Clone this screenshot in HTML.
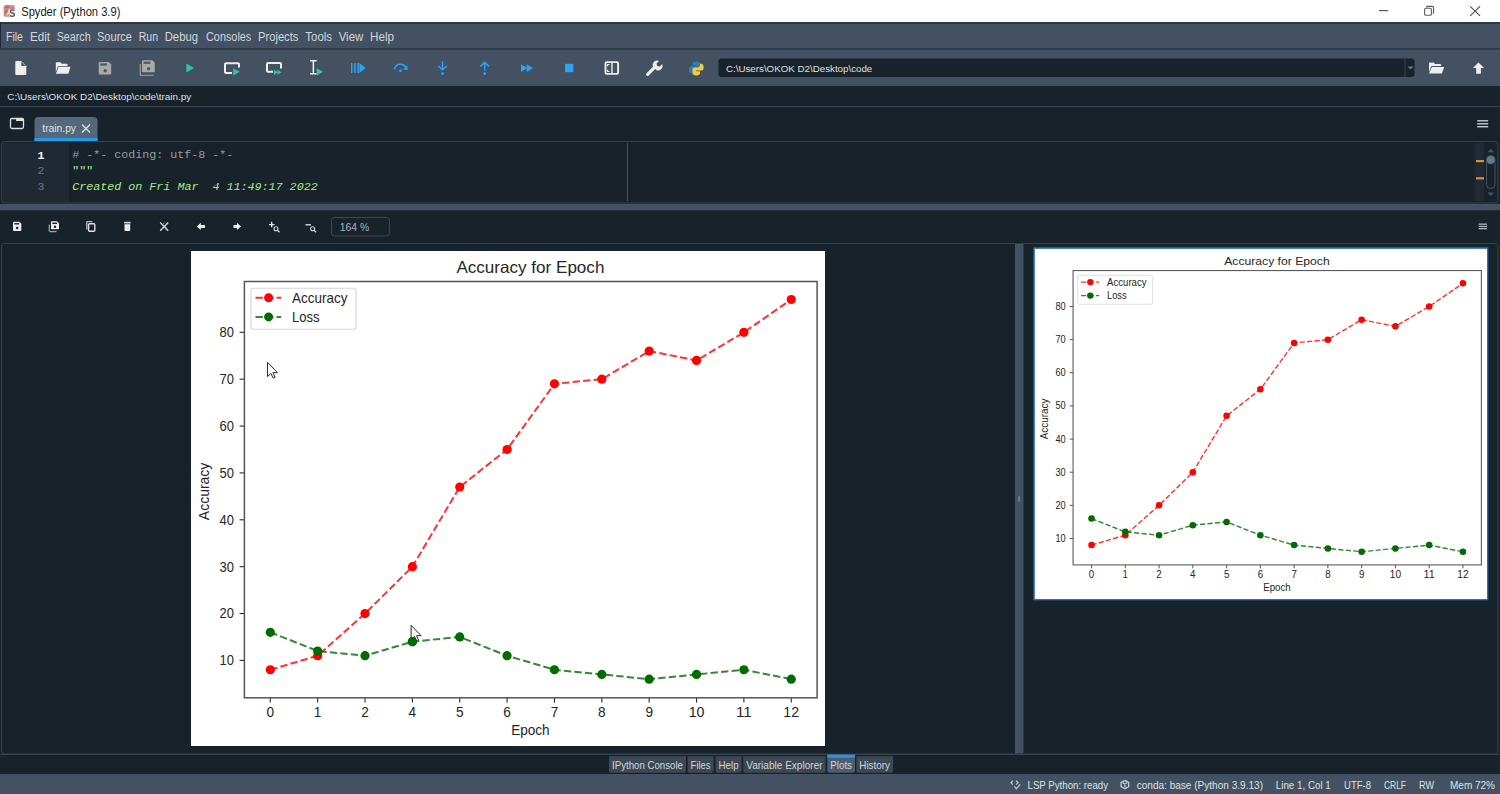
<!DOCTYPE html>
<html><head><meta charset="utf-8"><style>
html,body{margin:0;padding:0;background:#18222b;overflow:hidden;width:1500px;height:794px}
svg{display:block}
</style></head><body>
<svg width="1500" height="794" viewBox="0 0 1500 794">
<rect x="0" y="0" width="1500" height="22" fill="#ffffff" />
<rect x="3.6" y="5" width="11.2" height="11.8" rx="2.2" fill="#cf8a84"/>
<path d="M4.5 7 L8 6 L10 7.5 L6 8.5 Z M5 11 L7 9.5 L8 12 L5.5 13.5 Z" fill="#b9605c" opacity="0.8"/>
<path d="M9.2 8.6 L10.6 9.4 L8.2 14.8 L6.4 15.5 Z" fill="#f6e6e4"/>
<rect x="9.5" y="9.5" width="5.3" height="7.3" fill="#f2eeee"/>
<path d="M14.3 10.6 Q13.5 9.8 12.2 9.8 Q10.4 9.8 10.4 11.4 Q10.4 12.6 12.4 13 Q14.4 13.4 14.4 14.6 Q14.4 16.4 12.2 16.4 Q10.8 16.4 10 15.5" fill="none" stroke="#555" stroke-width="1.3"/>
<text xml:space="preserve" x="21.2" y="15.9" font-family="'Liberation Sans', sans-serif" font-size="12.4" fill="#1a1a1a" text-anchor="start" font-weight="normal" font-style="normal" textLength="99.2" lengthAdjust="spacingAndGlyphs" >Spyder (Python 3.9)</text>
<path d="M1379 10.6 H1388.3" stroke="#5c5c5c" stroke-width="1.2"/>
<rect x="1424.6" y="8.3" width="6.8" height="7" rx="1.3" fill="none" stroke="#5a5a5a" stroke-width="1.1"/><path d="M1426.3 7.3 Q1426.6 6.4 1427.6 6.4 H1432 Q1433.6 6.4 1433.6 8 V12.6 Q1433.6 13.4 1432.8 13.8" fill="none" stroke="#5a5a5a" stroke-width="1.1"/>
<path d="M1470.2 6.3 L1480 15.8 M1480 6.3 L1470.2 15.8" stroke="#4a4a4a" stroke-width="1.1"/>
<rect x="0" y="22" width="1500" height="2" fill="#2c3744" />
<rect x="0" y="24" width="1500" height="25" fill="#435162" />
<rect x="0" y="22" width="1" height="27" fill="#1f2a35" />
<rect x="0" y="48" width="1500" height="1.5" fill="#2f3a47" />
<text xml:space="preserve" x="6.0" y="40.9" font-family="'Liberation Sans', sans-serif" font-size="12" fill="#d3d7db" text-anchor="start" font-weight="normal" font-style="normal" textLength="16.9" lengthAdjust="spacingAndGlyphs" >File</text>
<text xml:space="preserve" x="30.0" y="40.9" font-family="'Liberation Sans', sans-serif" font-size="12" fill="#d3d7db" text-anchor="start" font-weight="normal" font-style="normal" textLength="20.0" lengthAdjust="spacingAndGlyphs" >Edit</text>
<text xml:space="preserve" x="56.7" y="40.9" font-family="'Liberation Sans', sans-serif" font-size="12" fill="#d3d7db" text-anchor="start" font-weight="normal" font-style="normal" textLength="34.0" lengthAdjust="spacingAndGlyphs" >Search</text>
<text xml:space="preserve" x="97.0" y="40.9" font-family="'Liberation Sans', sans-serif" font-size="12" fill="#d3d7db" text-anchor="start" font-weight="normal" font-style="normal" textLength="35.0" lengthAdjust="spacingAndGlyphs" >Source</text>
<text xml:space="preserve" x="138.7" y="40.9" font-family="'Liberation Sans', sans-serif" font-size="12" fill="#d3d7db" text-anchor="start" font-weight="normal" font-style="normal" textLength="19.3" lengthAdjust="spacingAndGlyphs" >Run</text>
<text xml:space="preserve" x="164.7" y="40.9" font-family="'Liberation Sans', sans-serif" font-size="12" fill="#d3d7db" text-anchor="start" font-weight="normal" font-style="normal" textLength="33.3" lengthAdjust="spacingAndGlyphs" >Debug</text>
<text xml:space="preserve" x="206.0" y="40.9" font-family="'Liberation Sans', sans-serif" font-size="12" fill="#d3d7db" text-anchor="start" font-weight="normal" font-style="normal" textLength="45.3" lengthAdjust="spacingAndGlyphs" >Consoles</text>
<text xml:space="preserve" x="258.0" y="40.9" font-family="'Liberation Sans', sans-serif" font-size="12" fill="#d3d7db" text-anchor="start" font-weight="normal" font-style="normal" textLength="40.4" lengthAdjust="spacingAndGlyphs" >Projects</text>
<text xml:space="preserve" x="305.3" y="40.9" font-family="'Liberation Sans', sans-serif" font-size="12" fill="#d3d7db" text-anchor="start" font-weight="normal" font-style="normal" textLength="26.7" lengthAdjust="spacingAndGlyphs" >Tools</text>
<text xml:space="preserve" x="338.7" y="40.9" font-family="'Liberation Sans', sans-serif" font-size="12" fill="#d3d7db" text-anchor="start" font-weight="normal" font-style="normal" textLength="24.6" lengthAdjust="spacingAndGlyphs" >View</text>
<text xml:space="preserve" x="370.0" y="40.9" font-family="'Liberation Sans', sans-serif" font-size="12" fill="#d3d7db" text-anchor="start" font-weight="normal" font-style="normal" textLength="24.0" lengthAdjust="spacingAndGlyphs" >Help</text>
<rect x="0" y="49.5" width="1500" height="36.5" fill="#435162" />
<rect x="718.5" y="58.5" width="696" height="18.5" rx="3" fill="#18222b"/>
<rect x="1404.5" y="59" width="1" height="18" fill="#37414f" />
<path d="M1407.5 66.5 L1410.5 69.5 L1413.5 66.5 Z" fill="#60798b"/>
<text xml:space="preserve" x="726.0" y="71.6" font-family="'Liberation Sans', sans-serif" font-size="9.7" fill="#dfe1e2" text-anchor="start" font-weight="normal" font-style="normal" textLength="146.3" lengthAdjust="spacingAndGlyphs" >C:\Users\OKOK D2\Desktop\code</text>
<path d="M15.3 62 Q15.3 61 16.3 61 H21.2 L26.3 66.2 V73.9 Q26.3 74.9 25.3 74.9 H16.3 Q15.3 74.9 15.3 73.9 Z" fill="#eeeeee"/>
<path d="M21.3 61.8 V66.1 H25.6 Z" fill="#4a5664"/>
<path d="M55.8 63.2 Q55.8 62.3 56.7 62.3 H60.5 L61.8 63.8 H66.7 Q67.5 63.8 67.5 64.6 V66 H59 Q58 66 57.6 67 L55.8 72 Z" fill="#eeeeee"/>
<path d="M58.6 66.8 H70.5 L68.3 73.7 H55.8 Z" fill="#eeeeee"/>
<path d="M98.7 63 Q98.7 62 99.7 62 H108.7 L111.2 64.5 V73.4 Q111.2 74.4 110.2 74.4 H99.7 Q98.7 74.4 98.7 73.4 Z" fill="#a9a9a9"/>
<rect x="100.3" y="63.4" width="6.50" height="2.23" fill="#4a5664"/>
<circle cx="105.20" cy="70.68" r="1.7" fill="#4a5664"/>
<path d="M140.3 64 V74.6 Q140.3 75.4 141.1 75.4 H153.6" fill="none" stroke="#8e949a" stroke-width="1.4"/>
<path d="M142 61.3 Q142 60.3 143 60.3 H152.3 L154.8 62.8 V71.3 Q154.8 72.3 153.8 72.3 H143 Q142 72.3 142 71.3 Z" fill="#a9a9a9"/>
<rect x="143.6" y="61.699999999999996" width="6.66" height="2.16" fill="#4a5664"/>
<circle cx="148.66" cy="68.70" r="1.7" fill="#4a5664"/>
<path d="M186.4 63.4 L194 68 L186.4 72.6 Z" fill="#33c3a5"/>
<path d="M232 73 H226 Q225 73 225 72 V64.2 Q225 63.3 226 63.3 H238 Q239 63.3 239 64.2 V67.5" fill="none" stroke="#eeeeee" stroke-width="2"/>
<path d="M233.2 68.2 L239.8 71.8 L233.2 75.4 Z" fill="#33c3a5"/>
<path d="M273 71.8 H268 Q267 71.8 267 70.8 V63.9 Q267 63 268 63 H280 Q281 63 281 63.9 V68.5" fill="none" stroke="#eeeeee" stroke-width="2"/>
<path d="M273.9 69.7 L278 72.2 L273.9 74.8 Z M277.5 69.7 L281.6 72.2 L277.5 74.8 Z" fill="#33c3a5"/>
<path d="M310 60.8 H316.7 M313.35 60.8 V73.7 M310 73.7 H316.7" fill="none" stroke="#eeeeee" stroke-width="1.5"/>
<path d="M316.8 68.2 L323 71.85 L316.8 75.5 Z" fill="#33c3a5"/>
<rect x="351" y="63" width="1.5" height="10" fill="#2ea3f2"/><rect x="354.2" y="63" width="1.5" height="10" fill="#2ea3f2"/><rect x="357.4" y="63" width="1.5" height="10" fill="#2ea3f2"/>
<path d="M359.5 63 L365.6 68 L359.5 73 Z" fill="#2ea3f2"/>
<path d="M394.3 69.5 Q395.5 64.2 400.4 64.2 Q404 64.2 405.8 67" fill="none" stroke="#2ea3f2" stroke-width="1.6"/>
<path d="M407.3 65.6 L407.6 70.3 L403.2 69.2 Z" fill="#2ea3f2"/>
<circle cx="400.4" cy="70.8" r="1.4" fill="#2ea3f2"/>
<path d="M442.5 61.2 V69.3 M438.3 66 L442.5 69.8 L446.8 66" fill="none" stroke="#2ea3f2" stroke-width="1.5"/>
<circle cx="442.5" cy="73.6" r="1.4" fill="#2ea3f2"/>
<path d="M484.7 62 V70.6 M480.4 66.4 L484.7 62.2 L489 66.4" fill="none" stroke="#2ea3f2" stroke-width="1.5"/>
<circle cx="484.7" cy="73.6" r="1.4" fill="#2ea3f2"/>
<path d="M521 64.2 L527.3 68 L521 71.9 Z M526.8 64.2 L533.1 68 L526.8 71.9 Z" fill="#2ea3f2"/>
<rect x="565" y="63.8" width="8.4" height="8.4" fill="#2ea3f2"/>
<rect x="605.5" y="62.1" width="12.6" height="11.8" rx="1.3" fill="none" stroke="#eeeeee" stroke-width="1.9"/>
<rect x="611.3" y="62" width="1.4" height="12" fill="#eeeeee"/>
<path d="M609.5 64.5 H607.6 V66.3 M609.5 71.5 H607.6 V69.7" fill="none" stroke="#eeeeee" stroke-width="1.1"/>
<path d="M647.6 74.4 L654.6 67.4" stroke="#eeeeee" stroke-width="3.1" stroke-linecap="round"/>
<path d="M652.8 66.6 A4.6 4.6 0 0 1 659 60.9 L656.5 63.4 L657.2 65.9 L659.7 66.6 L662.2 64.1 A4.6 4.6 0 0 1 656.6 70.3 Z" fill="#eeeeee"/>
<path d="M696.2 61.4 Q692.5 61.4 692.5 63.8 V65.6 H696.4 V66.3 H691.3 Q688.9 66.3 688.9 69.7 Q688.9 73.2 691.2 73.2 H692.5 V71.4 Q692.5 69.3 694.6 69.3 H698.2 Q700 69.3 700 67.5 V63.8 Q700 61.4 696.2 61.4 Z" fill="#3a78b5"/>
<path d="M696.3 75.5 Q700 75.5 700 73.1 V71.3 H696.1 V70.6 H701.2 Q703.6 70.6 703.6 67.2 Q703.6 63.7 701.3 63.7 H700 V65.5 Q700 67.6 697.9 67.6 H694.3 Q692.5 67.6 692.5 69.4 V73.1 Q692.5 75.5 696.3 75.5 Z" fill="#f2ce3d"/>
<path d="M1429 63.3 Q1429 62.4 1429.9 62.4 H1433.8 L1435.1 63.9 H1440.3 Q1441.1 63.9 1441.1 64.7 V66.1 H1432.3 Q1431.3 66.1 1430.9 67.1 L1429 72.3 Z" fill="#eeeeee"/>
<path d="M1431.9 66.9 H1444.2 L1441.9 73.6 H1429 Z" fill="#eeeeee"/>
<path d="M1478.5 62.4 L1484.2 68 H1480.9 V73.7 H1476.2 V68 H1472.9 Z" fill="#eeeeee"/>
<rect x="0" y="86" width="1500" height="20" fill="#18222b" />
<text xml:space="preserve" x="7.3" y="100.2" font-family="'Liberation Sans', sans-serif" font-size="9.5" fill="#dfe1e2" text-anchor="start" font-weight="normal" font-style="normal" textLength="184.0" lengthAdjust="spacingAndGlyphs" >C:\Users\OKOK D2\Desktop\code\train.py</text>
<rect x="0" y="106" width="1500" height="1" fill="#3a4653" />
<rect x="0" y="107" width="1500" height="97" fill="#18222b" />
<path d="M34.5 141 V121 Q34.5 117 38.5 117 H93.5 Q97.5 117 97.5 121 V141 Z" fill="#54687a"/>
<rect x="34.5" y="138" width="63" height="3" fill="#259ae9" />
<text xml:space="preserve" x="42.3" y="132.3" font-family="'Liberation Sans', sans-serif" font-size="11.5" fill="#dfe1e2" text-anchor="start" font-weight="normal" font-style="normal" textLength="33.7" lengthAdjust="spacingAndGlyphs" >train.py</text>
<path d="M82 124.5 L90 132.5 M90 124.5 L82 132.5" stroke="#dfe1e2" stroke-width="1.3"/>
<rect x="10.5" y="118.5" width="13" height="10" rx="1.5" fill="none" stroke="#dfe1e2" stroke-width="1.3"/><rect x="16" y="118.5" width="7.5" height="2.5" fill="#dfe1e2"/>
<rect x="1477.2" y="120.1" width="11" height="1.4" fill="#c4ccd4" />
<rect x="1477.2" y="123.1" width="11" height="1.4" fill="#c4ccd4" />
<rect x="1477.2" y="126.0" width="11" height="1.4" fill="#c4ccd4" />
<rect x="1.5" y="141.5" width="1496.5" height="61.5" rx="3" fill="#18222b" stroke="#34404d" stroke-width="1"/>
<rect x="3" y="143" width="66" height="59" fill="#1e2934" />
<rect x="627" y="143" width="1" height="58" fill="#4a5562" />
<text xml:space="preserve" x="37.5" y="158.5" font-family="'Liberation Mono', monospace" font-size="11.5" fill="#ffffff" text-anchor="start" font-weight="bold" font-style="normal" >1</text>
<text xml:space="preserve" x="37.5" y="174.0" font-family="'Liberation Mono', monospace" font-size="11.5" fill="#6f7882" text-anchor="start" font-weight="normal" font-style="normal" >2</text>
<text xml:space="preserve" x="37.5" y="189.5" font-family="'Liberation Mono', monospace" font-size="11.5" fill="#6f7882" text-anchor="start" font-weight="normal" font-style="normal" >3</text>
<text xml:space="preserve" x="72.2" y="158.4" font-family="'Liberation Mono', monospace" font-size="11.7" fill="#9a9a9a" text-anchor="start" font-weight="normal" font-style="normal" textLength="161.0" lengthAdjust="spacingAndGlyphs" ># -*- coding: utf-8 -*-</text>
<text xml:space="preserve" x="72.2" y="174.0" font-family="'Liberation Mono', monospace" font-size="11.7" fill="#b0e686" text-anchor="start" font-weight="normal" font-style="normal" textLength="21.0" lengthAdjust="spacingAndGlyphs" >"""</text>
<text xml:space="preserve" x="72.2" y="189.5" font-family="'Liberation Mono', monospace" font-size="11.7" fill="#b0e686" text-anchor="start" font-weight="normal" font-style="italic" textLength="245.5" lengthAdjust="spacingAndGlyphs" >Created on Fri Mar  4 11:49:17 2022</text>
<rect x="1474.5" y="143" width="9.5" height="58" fill="#1f2a35" />
<rect x="1476" y="160" width="8" height="2.2" fill="#e08c2a" />
<rect x="1476" y="177.2" width="8" height="2.2" fill="#e08c2a" />
<rect x="1486.5" y="155.5" width="8.5" height="33" rx="4" fill="#18222b" stroke="#455364" stroke-width="1"/>
<circle cx="1490.7" cy="160" r="4" fill="#60798b"/>
<path d="M1487.5 152.2 L1490.7 148.7 L1494 152.2 Z" fill="#455364"/><path d="M1487.5 192.6 L1490.7 196.2 L1494 192.6 Z" fill="#455364"/>
<rect x="0" y="204" width="1500" height="6.5" fill="#435162" />
<rect x="0" y="210.5" width="1500" height="544" fill="#18222b" />
<rect x="1478.7" y="223.5" width="8.4" height="1.3" fill="#aeb6be" />
<rect x="1478.7" y="225.8" width="8.4" height="1.3" fill="#aeb6be" />
<rect x="1478.7" y="228.0" width="8.4" height="1.3" fill="#aeb6be" />
<rect x="331.5" y="217.5" width="58" height="18.5" rx="3" fill="none" stroke="#3b4856" stroke-width="1"/>
<text xml:space="preserve" x="339.8" y="230.8" font-family="'Liberation Sans', sans-serif" font-size="10.5" fill="#aab2ba" text-anchor="start" font-weight="normal" font-style="normal" textLength="29.4" lengthAdjust="spacingAndGlyphs" >164 %</text>
<path d="M13 222.60000000000002 Q13 221.8 13.8 221.8 H19.3 L21.3 223.8 V230.2 Q21.3 231.0 20.5 231.0 H13.8 Q13 231.0 13 230.2 Z" fill="#eeeeee"/>
<rect x="14.3" y="223.10000000000002" width="4.98" height="1.4" fill="#19232d"/>
<circle cx="17.15" cy="228.06" r="1.2" fill="#19232d"/>
<path d="M49.3 224.5 V230.6 Q49.3 231.6 50.3 231.6 H56.5" fill="none" stroke="#9aa0a6" stroke-width="1.3"/>
<path d="M51 222.10000000000002 Q51 221.3 51.8 221.3 H57 L59 223.3 V228.5 Q59 229.3 58.2 229.3 H51.8 Q51 229.3 51 228.5 Z" fill="#eeeeee"/>
<rect x="52.3" y="222.60000000000002" width="4.80" height="1.4" fill="#19232d"/>
<circle cx="55.00" cy="226.74" r="1.2" fill="#19232d"/>
<path d="M86.8 229.5 V222.4 Q86.8 221.6 87.6 221.6 H92.3" fill="none" stroke="#b8bec4" stroke-width="1.3"/>
<rect x="88.6" y="223.7" width="6.2" height="7.5" rx="1" fill="none" stroke="#dfe1e2" stroke-width="1.4"/>
<rect x="124" y="221.7" width="6.7" height="1.8" rx="0.6" fill="#c9cdd0"/><path d="M124.5 224.2 H130.2 V230.3 Q130.2 231 129.5 231 H125.2 Q124.5 231 124.5 230.3 Z" fill="#eeeeee"/>
<path d="M160.2 222.5 L168.2 230.8 M168.2 222.5 L160.2 230.8" stroke="#d6dccf" stroke-width="1.4"/>
<path d="M162.8 224.4 L164.6 222.6 M165.2 229.4 L167 227.6" stroke="#9fb89a" stroke-width="0.8"/>
<path d="M196.7 226.4 L200.8 222.7 V224.9 H205 V228 H200.8 V230.1 Z" fill="#eeeeee"/>
<path d="M241 226.4 L236.9 222.7 V224.9 H233.5 V228 H236.9 V230.1 Z" fill="#eeeeee"/>
<path d="M269 224.6 H274.5 M271.7 221.7 V227.3" stroke="#e6e6e6" stroke-width="1.3"/>
<circle cx="276" cy="228.8" r="2" fill="none" stroke="#d0d4d8" stroke-width="1.1"/><path d="M277.4 230.2 L279.5 232.2" stroke="#d0d4d8" stroke-width="1.2"/>
<path d="M305.5 224.8 H311" stroke="#e6e6e6" stroke-width="1.3"/>
<circle cx="312.6" cy="228.8" r="2" fill="none" stroke="#d0d4d8" stroke-width="1.1"/><path d="M314 230.2 L316.2 232.2" stroke="#d0d4d8" stroke-width="1.2"/>
<rect x="1.5" y="243.5" width="1016" height="510.5" rx="3" fill="#18222b" stroke="#35414c" stroke-width="1"/>
<rect x="1020.5" y="243.5" width="477.5" height="510.5" rx="3" fill="#18222b" stroke="#35414c" stroke-width="1"/>
<rect x="1015" y="243.5" width="8.5" height="510" fill="#435162" />
<rect x="1018.1" y="496" width="2" height="5.7" rx="1" fill="#6b7b8d"/>
<g id="fig"><rect x="191" y="251" width="634" height="495" fill="#ffffff"/>
<line x1="270.30" y1="697.8" x2="270.30" y2="702.5999999999999" stroke="#262626" stroke-width="1.1"/>
<text x="270.30" y="716.6" font-family="'Liberation Sans', sans-serif" font-size="14.4" fill="#262626" text-anchor="middle" textLength="7.6" lengthAdjust="spacingAndGlyphs">0</text>
<line x1="317.66" y1="697.8" x2="317.66" y2="702.5999999999999" stroke="#262626" stroke-width="1.1"/>
<text x="317.66" y="716.6" font-family="'Liberation Sans', sans-serif" font-size="14.4" fill="#262626" text-anchor="middle" textLength="7.6" lengthAdjust="spacingAndGlyphs">1</text>
<line x1="365.02" y1="697.8" x2="365.02" y2="702.5999999999999" stroke="#262626" stroke-width="1.1"/>
<text x="365.02" y="716.6" font-family="'Liberation Sans', sans-serif" font-size="14.4" fill="#262626" text-anchor="middle" textLength="7.6" lengthAdjust="spacingAndGlyphs">2</text>
<line x1="412.38" y1="697.8" x2="412.38" y2="702.5999999999999" stroke="#262626" stroke-width="1.1"/>
<text x="412.38" y="716.6" font-family="'Liberation Sans', sans-serif" font-size="14.4" fill="#262626" text-anchor="middle" textLength="7.6" lengthAdjust="spacingAndGlyphs">4</text>
<line x1="459.74" y1="697.8" x2="459.74" y2="702.5999999999999" stroke="#262626" stroke-width="1.1"/>
<text x="459.74" y="716.6" font-family="'Liberation Sans', sans-serif" font-size="14.4" fill="#262626" text-anchor="middle" textLength="7.6" lengthAdjust="spacingAndGlyphs">5</text>
<line x1="507.10" y1="697.8" x2="507.10" y2="702.5999999999999" stroke="#262626" stroke-width="1.1"/>
<text x="507.10" y="716.6" font-family="'Liberation Sans', sans-serif" font-size="14.4" fill="#262626" text-anchor="middle" textLength="7.6" lengthAdjust="spacingAndGlyphs">6</text>
<line x1="554.46" y1="697.8" x2="554.46" y2="702.5999999999999" stroke="#262626" stroke-width="1.1"/>
<text x="554.46" y="716.6" font-family="'Liberation Sans', sans-serif" font-size="14.4" fill="#262626" text-anchor="middle" textLength="7.6" lengthAdjust="spacingAndGlyphs">7</text>
<line x1="601.82" y1="697.8" x2="601.82" y2="702.5999999999999" stroke="#262626" stroke-width="1.1"/>
<text x="601.82" y="716.6" font-family="'Liberation Sans', sans-serif" font-size="14.4" fill="#262626" text-anchor="middle" textLength="7.6" lengthAdjust="spacingAndGlyphs">8</text>
<line x1="649.18" y1="697.8" x2="649.18" y2="702.5999999999999" stroke="#262626" stroke-width="1.1"/>
<text x="649.18" y="716.6" font-family="'Liberation Sans', sans-serif" font-size="14.4" fill="#262626" text-anchor="middle" textLength="7.6" lengthAdjust="spacingAndGlyphs">9</text>
<line x1="696.54" y1="697.8" x2="696.54" y2="702.5999999999999" stroke="#262626" stroke-width="1.1"/>
<text x="696.54" y="716.6" font-family="'Liberation Sans', sans-serif" font-size="14.4" fill="#262626" text-anchor="middle" textLength="15.8" lengthAdjust="spacingAndGlyphs">10</text>
<line x1="743.90" y1="697.8" x2="743.90" y2="702.5999999999999" stroke="#262626" stroke-width="1.1"/>
<text x="743.90" y="716.6" font-family="'Liberation Sans', sans-serif" font-size="14.4" fill="#262626" text-anchor="middle" textLength="15.8" lengthAdjust="spacingAndGlyphs">11</text>
<line x1="791.26" y1="697.8" x2="791.26" y2="702.5999999999999" stroke="#262626" stroke-width="1.1"/>
<text x="791.26" y="716.6" font-family="'Liberation Sans', sans-serif" font-size="14.4" fill="#262626" text-anchor="middle" textLength="15.8" lengthAdjust="spacingAndGlyphs">12</text>
<line x1="239.6" y1="660.40" x2="244.4" y2="660.40" stroke="#262626" stroke-width="1.1"/>
<text x="234" y="665.30" font-family="'Liberation Sans', sans-serif" font-size="14.4" fill="#262626" text-anchor="end" textLength="14.4" lengthAdjust="spacingAndGlyphs">10</text>
<line x1="239.6" y1="613.53" x2="244.4" y2="613.53" stroke="#262626" stroke-width="1.1"/>
<text x="234" y="618.43" font-family="'Liberation Sans', sans-serif" font-size="14.4" fill="#262626" text-anchor="end" textLength="14.4" lengthAdjust="spacingAndGlyphs">20</text>
<line x1="239.6" y1="566.66" x2="244.4" y2="566.66" stroke="#262626" stroke-width="1.1"/>
<text x="234" y="571.56" font-family="'Liberation Sans', sans-serif" font-size="14.4" fill="#262626" text-anchor="end" textLength="14.4" lengthAdjust="spacingAndGlyphs">30</text>
<line x1="239.6" y1="519.79" x2="244.4" y2="519.79" stroke="#262626" stroke-width="1.1"/>
<text x="234" y="524.69" font-family="'Liberation Sans', sans-serif" font-size="14.4" fill="#262626" text-anchor="end" textLength="14.4" lengthAdjust="spacingAndGlyphs">40</text>
<line x1="239.6" y1="472.92" x2="244.4" y2="472.92" stroke="#262626" stroke-width="1.1"/>
<text x="234" y="477.82" font-family="'Liberation Sans', sans-serif" font-size="14.4" fill="#262626" text-anchor="end" textLength="14.4" lengthAdjust="spacingAndGlyphs">50</text>
<line x1="239.6" y1="426.05" x2="244.4" y2="426.05" stroke="#262626" stroke-width="1.1"/>
<text x="234" y="430.95" font-family="'Liberation Sans', sans-serif" font-size="14.4" fill="#262626" text-anchor="end" textLength="14.4" lengthAdjust="spacingAndGlyphs">60</text>
<line x1="239.6" y1="379.18" x2="244.4" y2="379.18" stroke="#262626" stroke-width="1.1"/>
<text x="234" y="384.08" font-family="'Liberation Sans', sans-serif" font-size="14.4" fill="#262626" text-anchor="end" textLength="14.4" lengthAdjust="spacingAndGlyphs">70</text>
<line x1="239.6" y1="332.31" x2="244.4" y2="332.31" stroke="#262626" stroke-width="1.1"/>
<text x="234" y="337.21" font-family="'Liberation Sans', sans-serif" font-size="14.4" fill="#262626" text-anchor="end" textLength="14.4" lengthAdjust="spacingAndGlyphs">80</text>
<text x="530.4" y="273" font-family="'Liberation Sans', sans-serif" font-size="16.5" fill="#262626" text-anchor="middle" textLength="148" lengthAdjust="spacingAndGlyphs">Accuracy for Epoch</text>
<text x="530.4" y="734.8" font-family="'Liberation Sans', sans-serif" font-size="14.4" fill="#262626" text-anchor="middle" textLength="38.5" lengthAdjust="spacingAndGlyphs">Epoch</text>
<text x="0" y="0" transform="translate(208.8 491.4) rotate(-90)" font-family="'Liberation Sans', sans-serif" font-size="14.4" fill="#262626" text-anchor="middle" textLength="57.5" lengthAdjust="spacingAndGlyphs">Accuracy</text>
<polyline points="270.30,669.77 317.66,655.71 365.02,613.53 412.38,566.66 459.74,486.98 507.10,449.48 554.46,383.87 601.82,379.18 649.18,351.06 696.54,360.43 743.90,332.31 791.26,299.50" fill="none" stroke="#ff0000" stroke-opacity="0.8" stroke-width="2" stroke-dasharray="7.35 3.18" stroke-linejoin="round"/>
<circle cx="270.30" cy="669.77" r="4.6" fill="#ff0000"/>
<circle cx="317.66" cy="655.71" r="4.6" fill="#ff0000"/>
<circle cx="365.02" cy="613.53" r="4.6" fill="#ff0000"/>
<circle cx="412.38" cy="566.66" r="4.6" fill="#ff0000"/>
<circle cx="459.74" cy="486.98" r="4.6" fill="#ff0000"/>
<circle cx="507.10" cy="449.48" r="4.6" fill="#ff0000"/>
<circle cx="554.46" cy="383.87" r="4.6" fill="#ff0000"/>
<circle cx="601.82" cy="379.18" r="4.6" fill="#ff0000"/>
<circle cx="649.18" cy="351.06" r="4.6" fill="#ff0000"/>
<circle cx="696.54" cy="360.43" r="4.6" fill="#ff0000"/>
<circle cx="743.90" cy="332.31" r="4.6" fill="#ff0000"/>
<circle cx="791.26" cy="299.50" r="4.6" fill="#ff0000"/>
<polyline points="270.30,632.28 317.66,651.03 365.02,655.71 412.38,641.65 459.74,636.96 507.10,655.71 554.46,669.77 601.82,674.46 649.18,679.15 696.54,674.46 743.90,669.77 791.26,679.15" fill="none" stroke="#006c00" stroke-opacity="0.8" stroke-width="2" stroke-dasharray="7.35 3.18" stroke-linejoin="round"/>
<circle cx="270.30" cy="632.28" r="4.6" fill="#006c00"/>
<circle cx="317.66" cy="651.03" r="4.6" fill="#006c00"/>
<circle cx="365.02" cy="655.71" r="4.6" fill="#006c00"/>
<circle cx="412.38" cy="641.65" r="4.6" fill="#006c00"/>
<circle cx="459.74" cy="636.96" r="4.6" fill="#006c00"/>
<circle cx="507.10" cy="655.71" r="4.6" fill="#006c00"/>
<circle cx="554.46" cy="669.77" r="4.6" fill="#006c00"/>
<circle cx="601.82" cy="674.46" r="4.6" fill="#006c00"/>
<circle cx="649.18" cy="679.15" r="4.6" fill="#006c00"/>
<circle cx="696.54" cy="674.46" r="4.6" fill="#006c00"/>
<circle cx="743.90" cy="669.77" r="4.6" fill="#006c00"/>
<circle cx="791.26" cy="679.15" r="4.6" fill="#006c00"/>
<rect x="244.4" y="281.5" width="572.7" height="416.29999999999995" fill="none" stroke="#555555" stroke-width="1.5"/>
<rect x="250.9" y="288.2" width="105.2" height="41" rx="2.6" fill="#ffffff" fill-opacity="0.8" stroke="#d6d6d6" stroke-width="1.1"/>
<line x1="255.5" y1="297.8" x2="281.2" y2="297.8" stroke="#ff0000" stroke-width="2" stroke-opacity="0.8" stroke-dasharray="7.35 3.18"/>
<circle cx="268.6" cy="297.8" r="4.5" fill="#ff0000"/>
<text x="292" y="302.7" font-family="'Liberation Sans', sans-serif" font-size="14.4" fill="#262626" textLength="55.5" lengthAdjust="spacingAndGlyphs">Accuracy</text>
<line x1="255.5" y1="316.9" x2="281.2" y2="316.9" stroke="#006c00" stroke-width="2" stroke-opacity="0.8" stroke-dasharray="7.35 3.18"/>
<circle cx="268.6" cy="316.9" r="4.5" fill="#006c00"/>
<text x="292" y="321.8" font-family="'Liberation Sans', sans-serif" font-size="14.4" fill="#262626" textLength="27.5" lengthAdjust="spacingAndGlyphs">Loss</text></g>
<path d="M267.5 362.3 V376.6 L270.9 373.40000000000003 L273.2 378.2 L275.1 377.3 L272.9 372.7 L277.5 372.7 Z" fill="#ffffff" stroke="#2b2b33" stroke-width="1"/>
<path d="M411.1 625.3 V639.5999999999999 L414.5 636.4 L416.8 641.1999999999999 L418.70000000000005 640.3 L416.5 635.6999999999999 L421.1 635.6999999999999 Z" fill="#ffffff" stroke="#2b2b33" stroke-width="1"/>
<circle cx="412.38" cy="641.66" r="4.6" fill="#006c00"/>
<rect x="1033" y="247" width="455.5" height="353.5" fill="#1d5a94"/><rect x="1034" y="248" width="453.5" height="351.5" fill="#3d86c8"/>
<use href="#fig" transform="translate(898.8297 71.5253) scale(0.71293 0.70707)"/>
<rect x="0" y="754.5" width="1500" height="19.5" fill="#18222b" />
<rect x="0" y="754" width="1500" height="1" fill="#37414f" />
<path d="M609 756.3 H686 V770.7 Q686 772.7 684 772.7 H611 Q609 772.7 609 770.7 Z" fill="#3d4855"/>
<text xml:space="preserve" x="612.0" y="769.2" font-family="'Liberation Sans', sans-serif" font-size="11.5" fill="#d2d6da" text-anchor="start" font-weight="normal" font-style="normal" textLength="71.0" lengthAdjust="spacingAndGlyphs" >IPython Console</text>
<path d="M687.6 756.3 H713.6 V770.7 Q713.6 772.7 711.6 772.7 H689.6 Q687.6 772.7 687.6 770.7 Z" fill="#3d4855"/>
<text xml:space="preserve" x="690.6" y="769.2" font-family="'Liberation Sans', sans-serif" font-size="11.5" fill="#d2d6da" text-anchor="start" font-weight="normal" font-style="normal" textLength="20.0" lengthAdjust="spacingAndGlyphs" >Files</text>
<path d="M715.6 756.3 H741.6 V770.7 Q741.6 772.7 739.6 772.7 H717.6 Q715.6 772.7 715.6 770.7 Z" fill="#3d4855"/>
<text xml:space="preserve" x="718.6" y="769.2" font-family="'Liberation Sans', sans-serif" font-size="11.5" fill="#d2d6da" text-anchor="start" font-weight="normal" font-style="normal" textLength="20.0" lengthAdjust="spacingAndGlyphs" >Help</text>
<path d="M743.2 756.3 H825.6 V770.7 Q825.6 772.7 823.6 772.7 H745.2 Q743.2 772.7 743.2 770.7 Z" fill="#3d4855"/>
<text xml:space="preserve" x="746.2" y="769.2" font-family="'Liberation Sans', sans-serif" font-size="11.5" fill="#d2d6da" text-anchor="start" font-weight="normal" font-style="normal" textLength="76.4" lengthAdjust="spacingAndGlyphs" >Variable Explorer</text>
<path d="M827.3 754.7 H855 V770.7 Q855 772.7 853 772.7 H829.3 Q827.3 772.7 827.3 770.7 Z" fill="#4c5d6e"/>
<rect x="827.3" y="754.7" width="27.700000000000045" height="3" fill="#3293dd" />
<text xml:space="preserve" x="830.3" y="769.2" font-family="'Liberation Sans', sans-serif" font-size="11.5" fill="#d2d6da" text-anchor="start" font-weight="normal" font-style="normal" textLength="21.7" lengthAdjust="spacingAndGlyphs" >Plots</text>
<path d="M856.3 756.3 H893 V770.7 Q893 772.7 891 772.7 H858.3 Q856.3 772.7 856.3 770.7 Z" fill="#3d4855"/>
<text xml:space="preserve" x="859.3" y="769.2" font-family="'Liberation Sans', sans-serif" font-size="11.5" fill="#d2d6da" text-anchor="start" font-weight="normal" font-style="normal" textLength="30.7" lengthAdjust="spacingAndGlyphs" >History</text>
<rect x="0" y="774" width="1500" height="20" fill="#435162" />
<path d="M1012.8 780.8 L1011 782.7 L1012.8 784.6 M1016.2 780.8 L1018 782.7 L1016.2 784.6 M1014.4 786.4 L1016.4 788.7 L1020.2 784.4" fill="none" stroke="#b8c4d0" stroke-width="1.3"/>
<path d="M1124.9 780.4 L1128.7 782.5 V786.6 L1124.9 788.7 L1121.1 786.6 V782.5 Z" fill="none" stroke="#c4ceda" stroke-width="1.3"/>
<path d="M1122.5 782.6 L1124.9 784 L1127.3 782.6 M1124.9 784 V787.5" fill="none" stroke="#c4ceda" stroke-width="1.2"/>
<text xml:space="preserve" x="1027.5" y="789.2" font-family="'Liberation Sans', sans-serif" font-size="11.5" fill="#dfe1e2" text-anchor="start" font-weight="normal" font-style="normal" textLength="80.5" lengthAdjust="spacingAndGlyphs" >LSP Python: ready</text>
<text xml:space="preserve" x="1136.7" y="789.2" font-family="'Liberation Sans', sans-serif" font-size="11.5" fill="#dfe1e2" text-anchor="start" font-weight="normal" font-style="normal" textLength="126.3" lengthAdjust="spacingAndGlyphs" >conda: base (Python 3.9.13)</text>
<text xml:space="preserve" x="1275.8" y="789.2" font-family="'Liberation Sans', sans-serif" font-size="11.5" fill="#dfe1e2" text-anchor="start" font-weight="normal" font-style="normal" textLength="55.0" lengthAdjust="spacingAndGlyphs" >Line 1, Col 1</text>
<text xml:space="preserve" x="1344.0" y="789.2" font-family="'Liberation Sans', sans-serif" font-size="11.5" fill="#dfe1e2" text-anchor="start" font-weight="normal" font-style="normal" textLength="27.0" lengthAdjust="spacingAndGlyphs" >UTF-8</text>
<text xml:space="preserve" x="1384.0" y="789.2" font-family="'Liberation Sans', sans-serif" font-size="11.5" fill="#dfe1e2" text-anchor="start" font-weight="normal" font-style="normal" textLength="22.0" lengthAdjust="spacingAndGlyphs" >CRLF</text>
<text xml:space="preserve" x="1419.0" y="789.2" font-family="'Liberation Sans', sans-serif" font-size="11.5" fill="#dfe1e2" text-anchor="start" font-weight="normal" font-style="normal" textLength="15.0" lengthAdjust="spacingAndGlyphs" >RW</text>
<text xml:space="preserve" x="1450.0" y="789.2" font-family="'Liberation Sans', sans-serif" font-size="11.5" fill="#dfe1e2" text-anchor="start" font-weight="normal" font-style="normal" textLength="45.0" lengthAdjust="spacingAndGlyphs" >Mem 72%</text>
</svg>
</body></html>
